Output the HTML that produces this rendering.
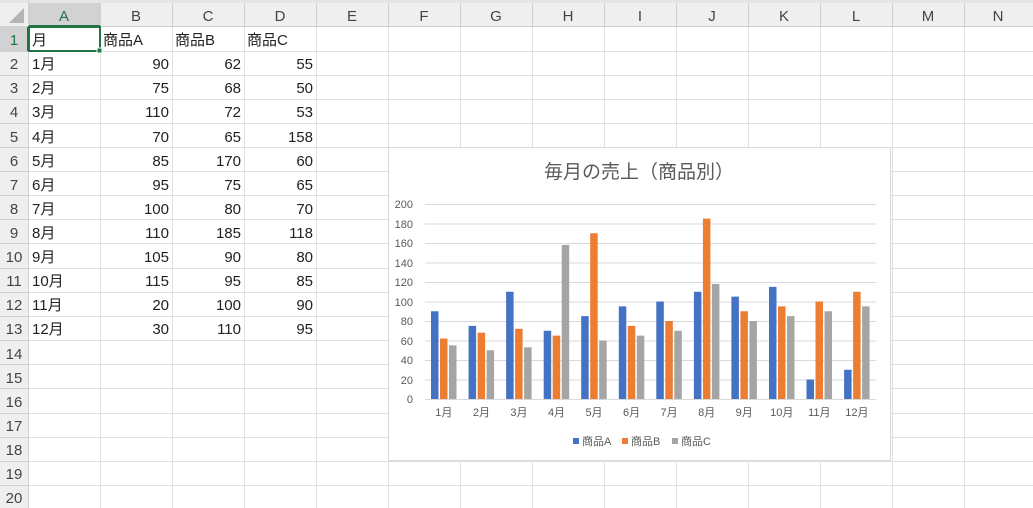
<!DOCTYPE html>
<html><head><meta charset="utf-8"><style>
body{margin:0;width:1033px;height:508px;overflow:hidden;background:#fff;font-family:"Liberation Sans","Noto Sans CJK JP",sans-serif;}
svg{position:absolute;left:0;top:0}
</style></head><body>
<svg width="1033" height="508" xmlns="http://www.w3.org/2000/svg" font-family="Liberation Sans, Noto Sans CJK JP, sans-serif">
<!-- headers bg -->
<rect x="0" y="0" width="1033" height="27" fill="#efefef"/>
<rect x="0" y="0" width="1033" height="3" fill="#e6e6e6"/>
<rect x="0" y="27" width="29" height="481" fill="#efefef"/>
<rect x="29" y="3" width="71" height="24" fill="#d2d2d2"/>
<rect x="29" y="25" width="71" height="2" fill="#217346"/>
<rect x="0" y="27" width="29" height="24" fill="#d2d2d2"/>
<rect x="27" y="27" width="2" height="24" fill="#217346"/>
<polygon points="24,8 24,23 9,23" fill="#b4b4b4"/>
<g stroke="#e1e1e1" stroke-width="1">
<line x1="29" y1="51.5" x2="1033" y2="51.5"/><line x1="29" y1="75.5" x2="1033" y2="75.5"/><line x1="29" y1="99.5" x2="1033" y2="99.5"/><line x1="29" y1="123.5" x2="1033" y2="123.5"/><line x1="29" y1="147.5" x2="1033" y2="147.5"/><line x1="29" y1="171.5" x2="1033" y2="171.5"/><line x1="29" y1="195.5" x2="1033" y2="195.5"/><line x1="29" y1="219.5" x2="1033" y2="219.5"/><line x1="29" y1="243.5" x2="1033" y2="243.5"/><line x1="29" y1="268.5" x2="1033" y2="268.5"/><line x1="29" y1="292.5" x2="1033" y2="292.5"/><line x1="29" y1="316.5" x2="1033" y2="316.5"/><line x1="29" y1="340.5" x2="1033" y2="340.5"/><line x1="29" y1="364.5" x2="1033" y2="364.5"/><line x1="29" y1="388.5" x2="1033" y2="388.5"/><line x1="29" y1="413.5" x2="1033" y2="413.5"/><line x1="29" y1="437.5" x2="1033" y2="437.5"/><line x1="29" y1="461.5" x2="1033" y2="461.5"/><line x1="29" y1="485.5" x2="1033" y2="485.5"/>
<line x1="100.5" y1="27" x2="100.5" y2="508"/><line x1="172.5" y1="27" x2="172.5" y2="508"/><line x1="244.5" y1="27" x2="244.5" y2="508"/><line x1="316.5" y1="27" x2="316.5" y2="508"/><line x1="388.5" y1="27" x2="388.5" y2="508"/><line x1="460.5" y1="27" x2="460.5" y2="508"/><line x1="532.5" y1="27" x2="532.5" y2="508"/><line x1="604.5" y1="27" x2="604.5" y2="508"/><line x1="676.5" y1="27" x2="676.5" y2="508"/><line x1="748.5" y1="27" x2="748.5" y2="508"/><line x1="820.5" y1="27" x2="820.5" y2="508"/><line x1="892.5" y1="27" x2="892.5" y2="508"/><line x1="964.5" y1="27" x2="964.5" y2="508"/>
</g>
<g stroke="#d0d0d0" stroke-width="1">
<line x1="0" y1="26.5" x2="1033" y2="26.5"/><line x1="28.5" y1="0" x2="28.5" y2="508"/>
<line x1="100.5" y1="3" x2="100.5" y2="27"/><line x1="172.5" y1="3" x2="172.5" y2="27"/><line x1="244.5" y1="3" x2="244.5" y2="27"/><line x1="316.5" y1="3" x2="316.5" y2="27"/><line x1="388.5" y1="3" x2="388.5" y2="27"/><line x1="460.5" y1="3" x2="460.5" y2="27"/><line x1="532.5" y1="3" x2="532.5" y2="27"/><line x1="604.5" y1="3" x2="604.5" y2="27"/><line x1="676.5" y1="3" x2="676.5" y2="27"/><line x1="748.5" y1="3" x2="748.5" y2="27"/><line x1="820.5" y1="3" x2="820.5" y2="27"/><line x1="892.5" y1="3" x2="892.5" y2="27"/><line x1="964.5" y1="3" x2="964.5" y2="27"/>
<line x1="0" y1="51.5" x2="28" y2="51.5"/><line x1="0" y1="75.5" x2="28" y2="75.5"/><line x1="0" y1="99.5" x2="28" y2="99.5"/><line x1="0" y1="123.5" x2="28" y2="123.5"/><line x1="0" y1="147.5" x2="28" y2="147.5"/><line x1="0" y1="171.5" x2="28" y2="171.5"/><line x1="0" y1="195.5" x2="28" y2="195.5"/><line x1="0" y1="219.5" x2="28" y2="219.5"/><line x1="0" y1="243.5" x2="28" y2="243.5"/><line x1="0" y1="268.5" x2="28" y2="268.5"/><line x1="0" y1="292.5" x2="28" y2="292.5"/><line x1="0" y1="316.5" x2="28" y2="316.5"/><line x1="0" y1="340.5" x2="28" y2="340.5"/><line x1="0" y1="364.5" x2="28" y2="364.5"/><line x1="0" y1="388.5" x2="28" y2="388.5"/><line x1="0" y1="413.5" x2="28" y2="413.5"/><line x1="0" y1="437.5" x2="28" y2="437.5"/><line x1="0" y1="461.5" x2="28" y2="461.5"/><line x1="0" y1="485.5" x2="28" y2="485.5"/>
</g>
<!-- column letters -->
<g font-size="15" fill="#444" text-anchor="middle">
<text x="64" y="21" fill="#217346">A</text><text x="136" y="21">B</text><text x="208" y="21">C</text><text x="280" y="21">D</text><text x="352" y="21">E</text><text x="424" y="21">F</text><text x="496" y="21">G</text><text x="568" y="21">H</text><text x="640" y="21">I</text><text x="712" y="21">J</text><text x="784" y="21">K</text><text x="856" y="21">L</text><text x="928" y="21">M</text><text x="998" y="21">N</text>
</g>
<g font-size="15" fill="#444" text-anchor="middle">
<text x="14" y="45" fill="#217346">1</text><text x="14" y="69">2</text><text x="14" y="93">3</text><text x="14" y="117">4</text><text x="14" y="142">5</text><text x="14" y="166">6</text><text x="14" y="190">7</text><text x="14" y="214">8</text><text x="14" y="238">9</text><text x="14" y="262">10</text><text x="14" y="286">11</text><text x="14" y="310">12</text><text x="14" y="334">13</text><text x="14" y="359">14</text><text x="14" y="383">15</text><text x="14" y="407">16</text><text x="14" y="431">17</text><text x="14" y="455">18</text><text x="14" y="479">19</text><text x="14" y="503">20</text>
</g>
<!-- selected cell -->
<rect x="29" y="27" width="71" height="24" fill="none" stroke="#217346" stroke-width="2"/>
<rect x="97" y="48" width="5" height="5" fill="#217346" stroke="#fff" stroke-width="1"/>
<!-- cell data -->
<g font-size="15" fill="#222">
<text x="32" y="45">月</text><text x="103" y="45">商品A</text><text x="175" y="45">商品B</text><text x="247" y="45">商品C</text>
<text x="32" y="69">1月</text><text x="32" y="93">2月</text><text x="32" y="117">3月</text><text x="32" y="142">4月</text><text x="32" y="166">5月</text><text x="32" y="190">6月</text><text x="32" y="214">7月</text><text x="32" y="238">8月</text><text x="32" y="262">9月</text><text x="32" y="286">10月</text><text x="32" y="310">11月</text><text x="32" y="334">12月</text>
</g>
<g font-size="15" fill="#222" text-anchor="end">
<text x="169" y="69">90</text><text x="241" y="69">62</text><text x="313" y="69">55</text>
<text x="169" y="93">75</text><text x="241" y="93">68</text><text x="313" y="93">50</text>
<text x="169" y="117">110</text><text x="241" y="117">72</text><text x="313" y="117">53</text>
<text x="169" y="142">70</text><text x="241" y="142">65</text><text x="313" y="142">158</text>
<text x="169" y="166">85</text><text x="241" y="166">170</text><text x="313" y="166">60</text>
<text x="169" y="190">95</text><text x="241" y="190">75</text><text x="313" y="190">65</text>
<text x="169" y="214">100</text><text x="241" y="214">80</text><text x="313" y="214">70</text>
<text x="169" y="238">110</text><text x="241" y="238">185</text><text x="313" y="238">118</text>
<text x="169" y="262">105</text><text x="241" y="262">90</text><text x="313" y="262">80</text>
<text x="169" y="286">115</text><text x="241" y="286">95</text><text x="313" y="286">85</text>
<text x="169" y="310">20</text><text x="241" y="310">100</text><text x="313" y="310">90</text>
<text x="169" y="334">30</text><text x="241" y="334">110</text><text x="313" y="334">95</text>
</g>
<!-- chart -->
<rect x="388.5" y="147.5" width="502" height="313" fill="#fff" stroke="#d9d9d9"/>
<text x="639" y="178" font-size="19" fill="#595959" text-anchor="middle">毎月の売上（商品別）</text>
<g stroke="#d9d9d9" stroke-width="1">
<line x1="425" y1="204.5" x2="876" y2="204.5"/><line x1="425" y1="224" x2="876" y2="224"/><line x1="425" y1="243.5" x2="876" y2="243.5"/><line x1="425" y1="263" x2="876" y2="263"/><line x1="425" y1="282.5" x2="876" y2="282.5"/><line x1="425" y1="302" x2="876" y2="302"/><line x1="425" y1="321.5" x2="876" y2="321.5"/><line x1="425" y1="341" x2="876" y2="341"/><line x1="425" y1="360.5" x2="876" y2="360.5"/><line x1="425" y1="380" x2="876" y2="380"/><line x1="425" y1="399.5" x2="876" y2="399.5"/>
</g>
<g font-size="11" fill="#595959" text-anchor="end">
<text x="413" y="208">200</text><text x="413" y="228">180</text><text x="413" y="247">160</text><text x="413" y="267">140</text><text x="413" y="286">120</text><text x="413" y="306">100</text><text x="413" y="325">80</text><text x="413" y="345">60</text><text x="413" y="364">40</text><text x="413" y="384">20</text><text x="413" y="403">0</text>
</g>
<g transform="translate(0,399) scale(1,-0.975)">
<g fill="#4472c4">
<rect x="431" y="0" width="7.5" height="90"/><rect x="468.6" y="0" width="7.5" height="75"/><rect x="506.1" y="0" width="7.5" height="110"/><rect x="543.7" y="0" width="7.5" height="70"/><rect x="581.2" y="0" width="7.5" height="85"/><rect x="618.8" y="0" width="7.5" height="95"/><rect x="656.3" y="0" width="7.5" height="100"/><rect x="693.9" y="0" width="7.5" height="110"/><rect x="731.4" y="0" width="7.5" height="105"/><rect x="769" y="0" width="7.5" height="115"/><rect x="806.5" y="0" width="7.5" height="20"/><rect x="844.1" y="0" width="7.5" height="30"/>
</g>
<g fill="#ed7d31">
<rect x="440" y="0" width="7.5" height="62"/><rect x="477.6" y="0" width="7.5" height="68"/><rect x="515.1" y="0" width="7.5" height="72"/><rect x="552.7" y="0" width="7.5" height="65"/><rect x="590.2" y="0" width="7.5" height="170"/><rect x="627.8" y="0" width="7.5" height="75"/><rect x="665.3" y="0" width="7.5" height="80"/><rect x="702.9" y="0" width="7.5" height="185"/><rect x="740.4" y="0" width="7.5" height="90"/><rect x="778" y="0" width="7.5" height="95"/><rect x="815.5" y="0" width="7.5" height="100"/><rect x="853.1" y="0" width="7.5" height="110"/>
</g>
<g fill="#a5a5a5">
<rect x="449" y="0" width="7.5" height="55"/><rect x="486.6" y="0" width="7.5" height="50"/><rect x="524.1" y="0" width="7.5" height="53"/><rect x="561.7" y="0" width="7.5" height="158"/><rect x="599.2" y="0" width="7.5" height="60"/><rect x="636.8" y="0" width="7.5" height="65"/><rect x="674.3" y="0" width="7.5" height="70"/><rect x="711.9" y="0" width="7.5" height="118"/><rect x="749.4" y="0" width="7.5" height="80"/><rect x="787" y="0" width="7.5" height="85"/><rect x="824.5" y="0" width="7.5" height="90"/><rect x="862.1" y="0" width="7.5" height="95"/>
</g>
</g>
<g font-size="11" fill="#595959" text-anchor="middle">
<text x="443.8" y="416">1月</text><text x="481.4" y="416">2月</text><text x="518.9" y="416">3月</text><text x="556.5" y="416">4月</text><text x="594" y="416">5月</text><text x="631.6" y="416">6月</text><text x="669.1" y="416">7月</text><text x="706.7" y="416">8月</text><text x="744.2" y="416">9月</text><text x="781.8" y="416">10月</text><text x="819.3" y="416">11月</text><text x="856.9" y="416">12月</text>
</g>
<g font-size="11" fill="#595959">
<rect x="573" y="438" width="6" height="6" fill="#4472c4"/><text x="582" y="445">商品A</text>
<rect x="622" y="438" width="6" height="6" fill="#ed7d31"/><text x="631" y="445">商品B</text>
<rect x="672" y="438" width="6" height="6" fill="#a5a5a5"/><text x="681" y="445">商品C</text>
</g>
</svg>
</body></html>
